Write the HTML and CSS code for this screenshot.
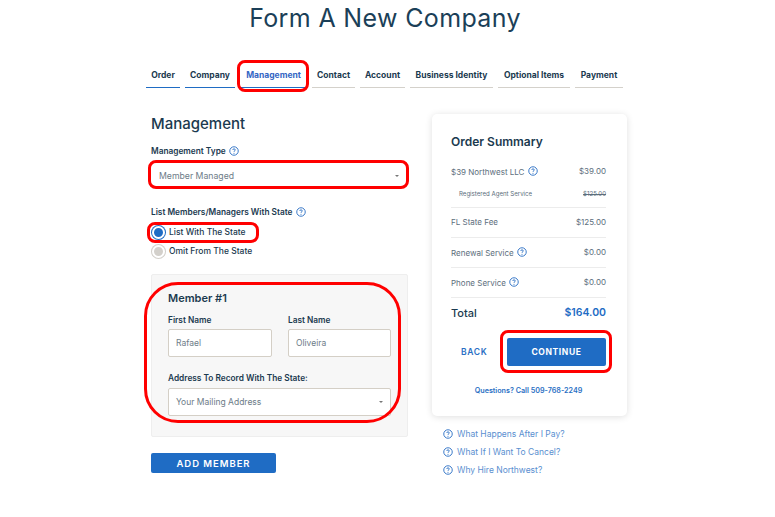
FILE: index.html
```html
<!DOCTYPE html>
<html lang="en">
    <head>
        <meta charset="UTF-8">
        <meta name="viewport" content="width=device-width, initial-scale=1.0">
        <title>Form A New Company</title>
        <link rel="stylesheet" href="styles.css">
    </head>
    <body>
        <svg class="sprite" width="0" height="0">
            <symbol id="help" viewBox="0 0 12 12">
                <circle cx="6" cy="6" r="5.1" fill="none" stroke="currentColor" stroke-width="1.1"/>
                <path d="M4.5 4.8C4.5 3.9 5.2 3.4 6 3.4C6.9 3.4 7.5 3.9 7.5 4.7C7.5 5.7 6 5.8 6 7" fill="none" stroke="currentColor" stroke-width="1.1"/>
                <circle cx="6" cy="8.6" r=".65" fill="currentColor"/>
            </symbol>
        </svg>

        <h1 class="page-title">Form A New Company</h1>

        <nav class="steps">
            <a class="step done step-order">Order</a>
            <a class="step done step-company">Company</a>
            <a class="step done current step-management">Management<span class="mark"></span></a>
            <a class="step step-contact">Contact</a>
            <a class="step step-account">Account</a>
            <a class="step step-identity">Business Identity</a>
            <a class="step step-optional">Optional Items</a>
            <a class="step step-payment">Payment</a>
        </nav>

        <main class="columns">
            <section class="form-column">
                <h2 class="section-title">Management</h2>

                <div class="label help-label">Management Type <svg class="help"><use href="#help"/></svg></div>
                <div class="type-select">
                    <span>Member Managed</span><i class="caret"></i>
                    <span class="mark"></span>
                </div>

                <div class="label help-label list-label">List Members/Managers With State <svg class="help"><use href="#help"/></svg></div>
                <div class="radio-row checked">
                    <span class="radio"></span>List With The State
                    <span class="mark"></span>
                </div>
                <div class="radio-row">
                    <span class="radio"></span>Omit From The State
                </div>

                <div class="member-panel">
                    <span class="mark"></span>
                    <h3 class="member-title">Member #1</h3>
                    <div class="name-grid">
                        <div>
                            <div class="label">First Name</div>
                            <div class="field">Rafael</div>
                        </div>
                        <div>
                            <div class="label">Last Name</div>
                            <div class="field">Oliveira</div>
                        </div>
                    </div>
                    <div class="label address-label">Address To Record With The State:</div>
                    <div class="field select-field">
                        <span>Your Mailing Address</span><i class="caret"></i>
                    </div>
                </div>

                <button class="add-member">ADD MEMBER</button>
            </section>

            <aside class="side-column">
                <div class="summary">
                    <h3 class="summary-title">Order Summary</h3>
                    <div class="line first-line">
                        <span>$39 Northwest LLC <svg class="help"><use href="#help"/></svg></span>
                        <span>$39.00</span>
                    </div>
                    <div class="line sub-line">
                        <span>Registered Agent Service</span>
                        <s>$125.00</s>
                    </div>
                    <div class="line">
                        <span>FL State Fee</span>
                        <span>$125.00</span>
                    </div>
                    <div class="line">
                        <span>Renewal Service <svg class="help"><use href="#help"/></svg></span>
                        <span>$0.00</span>
                    </div>
                    <div class="line">
                        <span>Phone Service <svg class="help"><use href="#help"/></svg></span>
                        <span>$0.00</span>
                    </div>
                    <div class="line total-line">
                        <span>Total</span>
                        <span class="total-price">$164.00</span>
                    </div>
                    <div class="actions">
                        <a class="back">BACK</a>
                        <button class="continue">CONTINUE<span class="mark"></span></button>
                    </div>
                    <a class="call">Questions? Call 509-768-2249</a>
                </div>

                <ul class="faq">
                    <li><svg class="help"><use href="#help"/></svg>What Happens After I Pay?</li>
                    <li><svg class="help"><use href="#help"/></svg>What If I Want To Cancel?</li>
                    <li><svg class="help"><use href="#help"/></svg>Why Hire Northwest?</li>
                </ul>
            </aside>
        </main>
    </body>
</html>
```

FILE: styles.css
```css
* {
    box-sizing: border-box;
}

body {
    font-family: Inter, "Open Sans", sans-serif;
    margin: 0;
    color: #1b3a4f;
    background-color: #fff;
}

.sprite {
    position: absolute;
}

.help {
    width: 10px;
    height: 10px;
    color: #2a6fc4;
    vertical-align: -1.5px;
    margin-left: 1px;
}

/* red annotation boxes that sit over the page */
.mark {
    position: absolute;
    border: 3px solid #f00;
    border-radius: 8px;
    pointer-events: none;
}

.page-title {
    margin: 0;
    padding: 3px 5px 0 0;
    height: 33px;
    text-align: center;
    font-size: 25px;
    line-height: 30px;
    font-weight: 400;
    letter-spacing: .35px;
    color: #1b3f58;
}

.steps {
    display: flex;
    gap: 5px;
    margin: 31px 0 0 146px;
    width: 477px;
}

.step {
    position: relative;
    display: block;
    height: 24px;
    line-height: 22px;
    text-align: center;
    font-size: 8.5px;
    font-weight: 700;
    color: #1b3a4f;
    border-bottom: 1px solid #d4d1cb;
}

.step.done {
    border-bottom-color: #1f6cc4;
}

.step.current {
    color: #3566c4;
}

.step-order { width: 34px; }
.step-company { width: 50px; }
.step-management { width: 67px; }
.step-contact { width: 43px; }
.step-account { width: 45px; }
.step-identity { width: 83px; }
.step-optional { width: 72px; }
.step-payment { width: 48px; }

.step-management .mark {
    inset: -4px -2px -5px -3px;
}

.columns {
    display: grid;
    grid-template-columns: 257px 195px;
    column-gap: 24px;
    width: 476px;
    margin: 26px 0 0 151px;
}

.section-title {
    margin: 0;
    padding-top: 1px;
    font-size: 15px;
    line-height: 18px;
    font-weight: 500;
}

.label {
    font-size: 8.3px;
    font-weight: 600;
    line-height: 12px;
}

.help-label {
    margin-top: 12px;
}

.type-select {
    position: relative;
    display: flex;
    align-items: center;
    justify-content: space-between;
    height: 29px;
    margin-top: 3px;
    padding: 2px 9px 0 8px;
    font-size: 8.7px;
    color: #6d7c88;
}

.type-select .mark {
    inset: 0 -1px 0 -3px;
}

.caret {
    width: 0;
    height: 0;
    border-left: 2px solid transparent;
    border-right: 2px solid transparent;
    border-top: 2px solid #777;
}

.list-label {
    margin-top: 17px;
}

.radio-row {
    position: relative;
    display: flex;
    align-items: center;
    gap: 4px;
    height: 19px;
    font-size: 8.5px;
    font-weight: 500;
    color: #1b3a4f;
}

.radio-row.checked {
    margin-top: 4px;
}

.radio-row .mark {
    inset: 0 149px -2px -4px;
}

.radio {
    width: 13px;
    height: 13px;
    margin-left: 1px;
    margin-top: 2px;
    border-radius: 50%;
    background-color: #d3d0cb;
    border: 2px solid #fff;
    box-shadow: 0 0 0 1px #d3d0cb;
}

.checked .radio {
    background-color: #1f6cc4;
    box-shadow: 0 0 0 1px #1f6cc4;
}

.member-panel {
    position: relative;
    height: 163px;
    margin-top: 14px;
    padding: 17px 16px 0 16px;
    background-color: #f7f7f7;
    border: 1px solid #eeeeee;
    border-radius: 2px;
}

.member-panel .mark {
    inset: 7px 6px 13px -8px;
    border-radius: 34px;
}

.member-title {
    margin: 0;
    font-size: 11px;
    line-height: 13px;
    font-weight: 600;
}

.name-grid {
    display: grid;
    grid-template-columns: 104px 103px;
    column-gap: 16px;
    margin-top: 9px;
}

.name-grid .label {
    margin-bottom: 3px;
}

.field {
    height: 28px;
    line-height: 27px;
    padding: 0 7px;
    font-size: 8.5px;
    color: #6d7c88;
    background-color: #fff;
    border: 1px solid #d4cfc6;
    border-radius: 2px;
}

.address-label {
    margin-top: 15px;
    margin-bottom: 4px;
}

.select-field {
    display: flex;
    align-items: center;
    justify-content: space-between;
}

.add-member {
    display: block;
    width: 125px;
    height: 20px;
    margin-top: 16px;
    padding: 0;
    border: none;
    border-radius: 2px;
    font-family: inherit;
    font-size: 9.5px;
    font-weight: 600;
    letter-spacing: .95px;
    color: #fff;
    background-color: #1f6cc4;
}

.summary {
    height: 302px;
    padding: 20px 21px 0 19px;
    background-color: #fff;
    border-radius: 5px;
    box-shadow: 0 1px 7px rgba(0, 0, 0, .13);
}

.summary-title {
    margin: 0 0 10px;
    font-size: 12px;
    line-height: 16px;
    font-weight: 600;
}

.line {
    display: flex;
    justify-content: space-between;
    align-items: center;
    height: 30px;
    padding-bottom: 1px;
    font-size: 8px;
    color: #5c6e7c;
    border-top: 1px solid #ececec;
}

.first-line {
    height: 22px;
    padding-bottom: 0;
    border-top: none;
}

.sub-line {
    height: 25px;
    padding: 0 0 3px 8px;
    border-top: none;
    font-size: 6.1px;
}

.total-line {
    height: 31px;
    font-size: 11px;
    font-weight: 500;
    color: #1b3a4f;
}

.total-price {
    font-size: 10.5px;
    font-weight: 600;
    color: #1f6cc4;
}

.actions {
    display: flex;
    align-items: center;
    justify-content: space-between;
    margin-top: 10px;
}

.back {
    margin-left: 10px;
    font-size: 8.5px;
    font-weight: 600;
    letter-spacing: .7px;
    color: #2a6fc4;
}

.continue {
    position: relative;
    width: 99px;
    height: 28px;
    padding: 0;
    border: none;
    border-radius: 2px;
    font-family: inherit;
    font-size: 8.5px;
    font-weight: 700;
    letter-spacing: .6px;
    color: #fff;
    background-color: #1f6cc4;
}

.continue .mark {
    inset: -8px -6px -7px -7px;
}

.call {
    display: block;
    margin-top: 20px;
    text-align: center;
    font-size: 7.2px;
    font-weight: 600;
    color: #2a6fc4;
}

.faq {
    list-style: none;
    margin: 9px 0 0 11px;
    padding: 0;
    font-size: 8.5px;
    color: #5a8fd0;
}

.faq li {
    display: flex;
    align-items: center;
    gap: 4px;
    height: 18px;
}

.faq .help {
    margin-left: 0;
}
```
